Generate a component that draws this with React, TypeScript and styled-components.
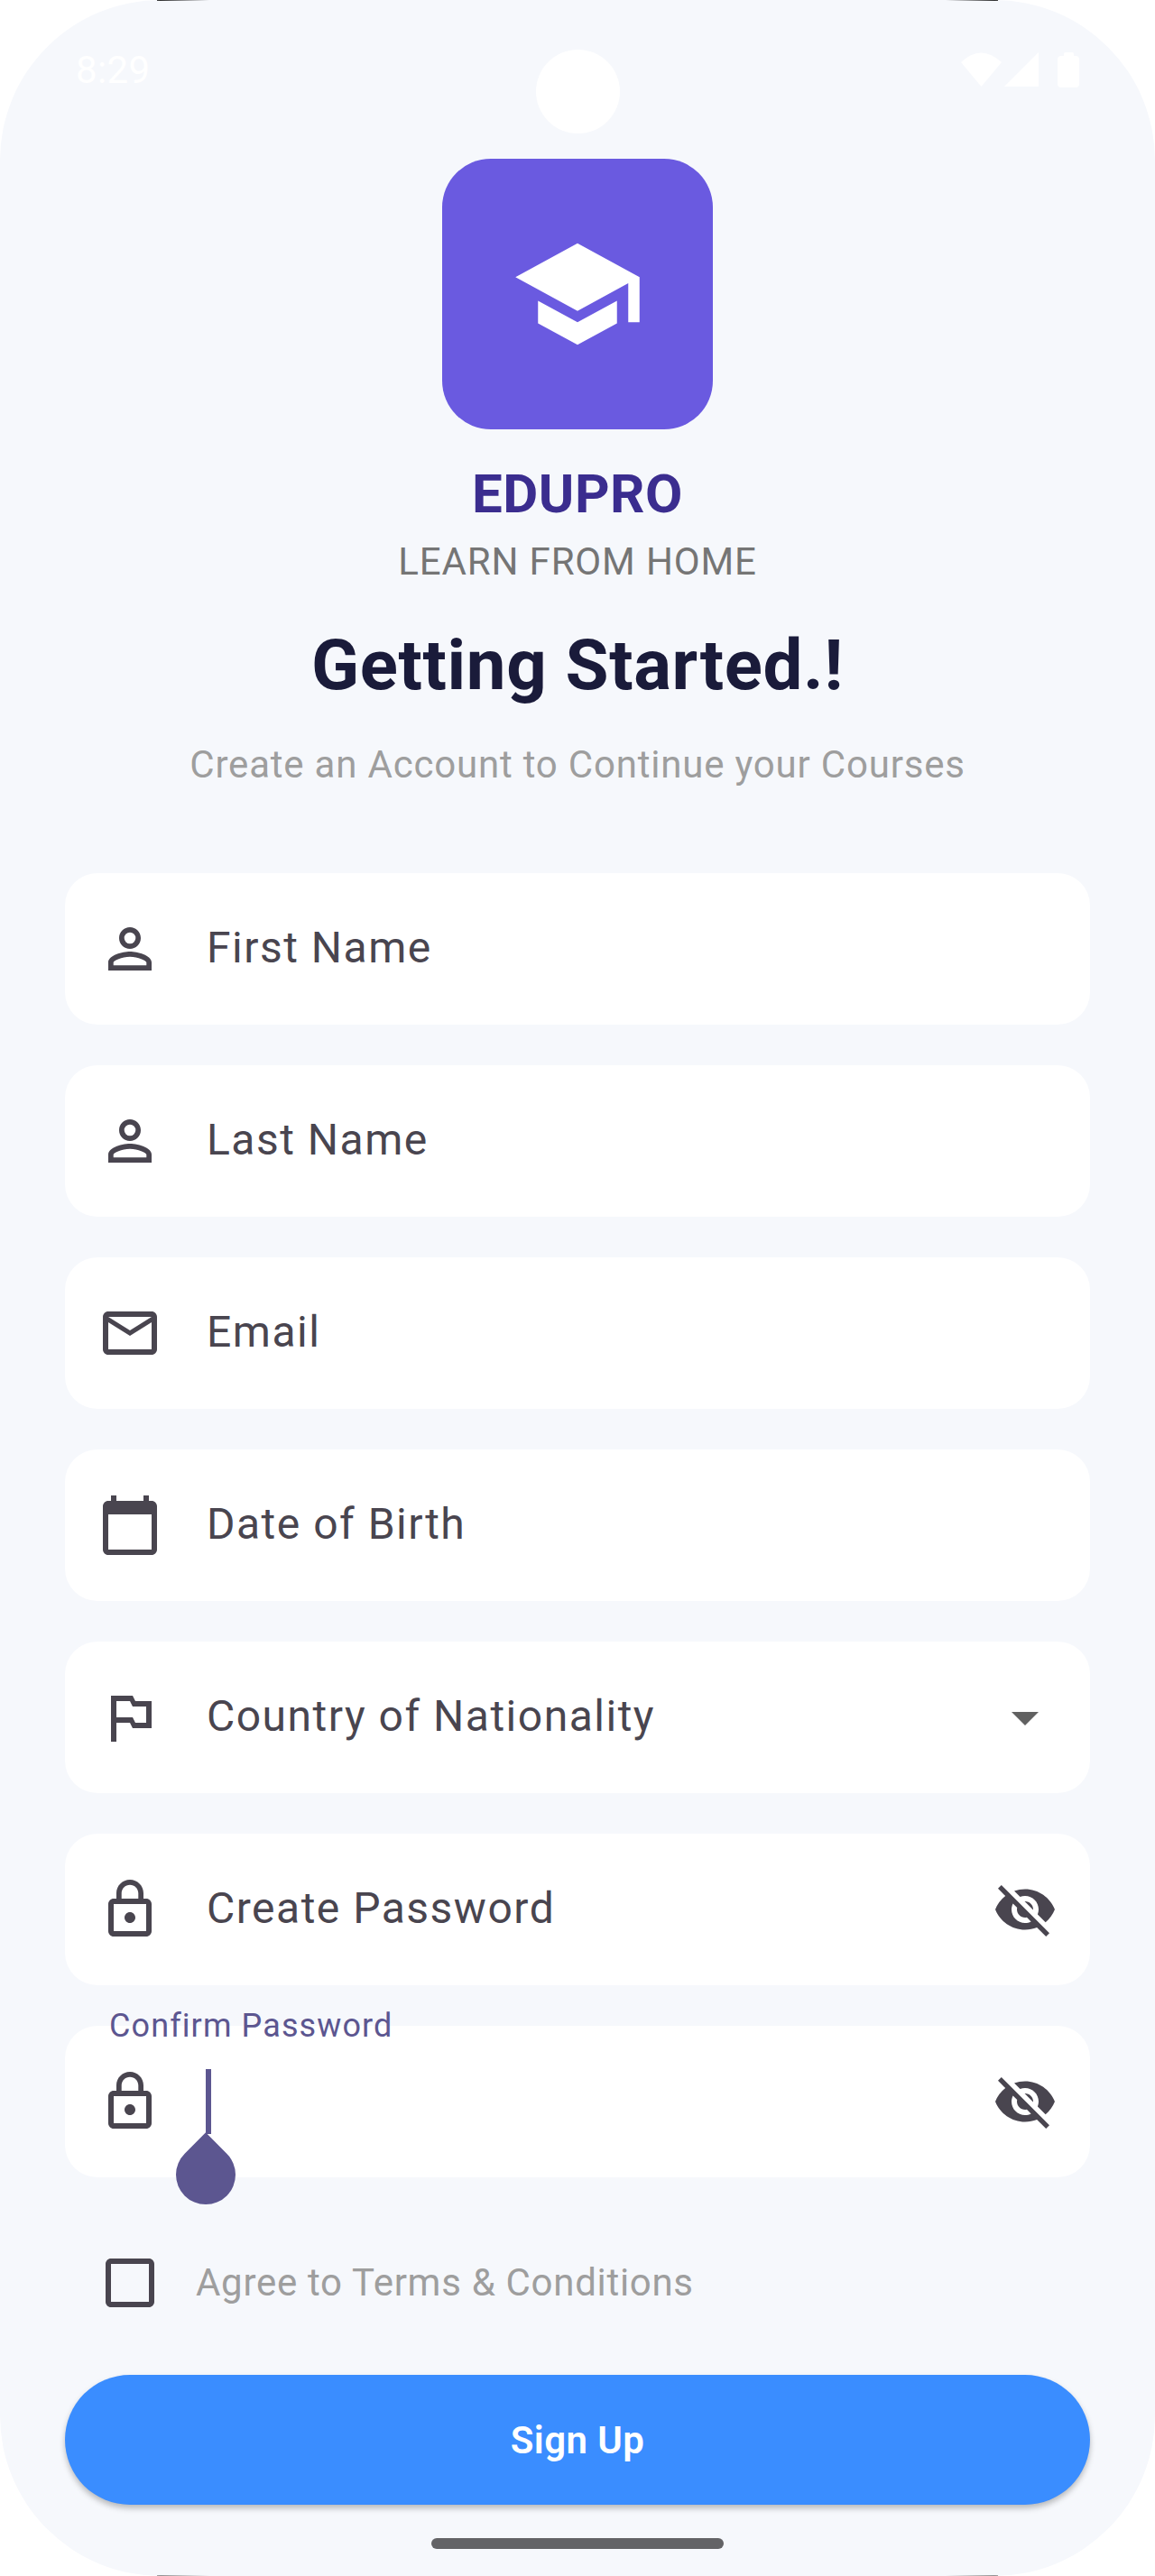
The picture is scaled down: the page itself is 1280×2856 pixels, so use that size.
import React from 'react';
import styled, { createGlobalStyle } from 'styled-components';
import {
  MdArrowDropDown,
  MdCalendarToday,
  MdCheckBoxOutlineBlank,
  MdLockOutline,
  MdMailOutline,
  MdOutlinedFlag,
  MdPersonOutline,
  MdSchool,
  MdVisibilityOff,
} from 'react-icons/md';

const GlobalStyle = createGlobalStyle`
  html, body {
    margin: 0;
    padding: 0;
    background: #fff;
  }
  * {
    box-sizing: border-box;
  }
`;

const Screen = styled.div`
  position: relative;
  width: 1280px;
  height: 2856px;
  padding: 176px 72px 0;
  background: #f6f8fc;
  border-radius: 178px;
  overflow: hidden;
  font-family: Roboto, 'Liberation Sans', sans-serif;
  display: flex;
  flex-direction: column;
  align-items: center;
`;

const EdgeLine = styled.div<{ side: 'left' | 'right'; bottom?: boolean }>`
  position: absolute;
  height: 1px;
  width: 58px;
  ${({ side }) => (side === 'left' ? 'left: 174px;' : 'right: 174px;')}
  ${({ bottom }) => (bottom ? 'bottom: 0;' : 'top: 0;')}
  background: linear-gradient(
    ${({ side }) => (side === 'left' ? 'to right' : 'to left')},
    ${({ bottom }) => (bottom ? '#8a8a8a' : '#222')},
    #f6f8fc
  );
`;

const StatusBar = styled.div`
  position: absolute;
  top: 0;
  left: 0;
  right: 0;
  height: 100px;
  color: #fff;
`;

const Clock = styled.span`
  position: absolute;
  left: 84px;
  top: 53px;
  font-size: 42px;
  line-height: 50px;
  letter-spacing: 0.4px;
`;

const StatusIcons = styled.svg`
  position: absolute;
  left: 1060px;
  top: 54px;
`;

const Camera = styled.div`
  position: absolute;
  left: 594px;
  top: 55px;
  width: 93px;
  height: 93px;
  border-radius: 50%;
  background: #fff;
`;

const Logo = styled.div`
  width: 300px;
  height: 300px;
  border-radius: 54px;
  background: #6a5ae0;
  color: #fff;
  display: flex;
  align-items: center;
  justify-content: center;
  flex-shrink: 0;
`;

const Brand = styled.h1`
  margin: 37px 0 0;
  font-size: 60px;
  line-height: 70px;
  font-weight: 700;
  letter-spacing: 0.5px;
  color: #3b2d8f;
`;

const Tagline = styled.div`
  margin-top: 15px;
  font-size: 42px;
  line-height: 50px;
  letter-spacing: 0.85px;
  color: #757575;
`;

const Title = styled.h2`
  margin: 45px 0 0;
  font-size: 78px;
  line-height: 90px;
  font-weight: 700;
  letter-spacing: 0.65px;
  color: #1a1b3a;
`;

const Subtitle = styled.div`
  margin-top: 40px;
  font-size: 42px;
  line-height: 50px;
  letter-spacing: 0.8px;
  color: #9e9e9e;
`;

const Form = styled.div`
  margin-top: 95px;
  width: 100%;
  display: flex;
  flex-direction: column;
  gap: 45px;
`;

const Field = styled.div`
  position: relative;
  height: 168px;
  padding: 0 36px;
  background: #fff;
  border-radius: 36px;
  display: flex;
  align-items: center;
  color: #49454f;
`;

const FieldText = styled.span`
  margin: 0 0 2px 49px;
  flex: 1;
  font-size: 48px;
  line-height: 72px;
  letter-spacing: 1.5px;
  color: #49454f;
`;

const Spacer = styled.span`
  flex: 1;
`;

const DropArrow = styled(MdArrowDropDown)`
  color: #616161;
`;

const FloatingLabel = styled.span`
  position: absolute;
  left: 49px;
  top: -22px;
  font-size: 36px;
  line-height: 44px;
  letter-spacing: 1.1px;
  color: #5c5690;
`;

const CaretHandle = styled.svg`
  position: absolute;
  left: 123px;
  top: 48px;
`;

const TermsRow = styled.div`
  margin-top: 81px;
  width: 100%;
  padding-left: 36px;
  height: 72px;
  display: flex;
  align-items: center;
  color: #49454f;
`;

const TermsText = styled.span`
  margin-left: 37px;
  font-size: 42px;
  line-height: 50px;
  letter-spacing: 0.7px;
  color: #9e9e9e;
`;

const SignUp = styled.button`
  margin-top: 66px;
  width: 100%;
  height: 144px;
  border: 0;
  border-radius: 72px;
  background: #3a8dff;
  box-shadow: 0 4px 6px rgba(0, 0, 0, 0.25);
  color: #fff;
  font-family: inherit;
  font-size: 42px;
  font-weight: 600;
  letter-spacing: 0.4px;
  padding: 0;
`;

const HomeBar = styled.div`
  position: absolute;
  left: 478px;
  bottom: 30px;
  width: 324px;
  height: 12px;
  border-radius: 6px;
  background: #636366;
`;

const App: React.FC = () => (
  <>
    <GlobalStyle />
    <Screen>
      <EdgeLine side="left" />
      <EdgeLine side="right" />
      <EdgeLine side="left" bottom />
      <EdgeLine side="right" bottom />

      <StatusBar>
        <Clock>8:29</Clock>
        <StatusIcons width="140" height="46" viewBox="0 0 140 46" fill="#fff">
          <path d="M5 15 Q27 -6 50 15 L27.5 42 Z" />
          <path d="M53 42 L91 4 V42 Z" />
          <path d="M121 4 h7 a2 2 0 0 1 2 2 v2 h2 a4 4 0 0 1 4 4 v27 a4 4 0 0 1 -4 4 h-16 a4 4 0 0 1 -4 -4 v-27 a4 4 0 0 1 4 -4 h3 v-2 a2 2 0 0 1 2 -2 Z" />
        </StatusIcons>
      </StatusBar>
      <Camera />

      <Logo>
        <MdSchool size={150} />
      </Logo>
      <Brand>EDUPRO</Brand>
      <Tagline>LEARN FROM HOME</Tagline>
      <Title>Getting Started.!</Title>
      <Subtitle>Create an Account to Continue your Courses</Subtitle>

      <Form>
        <Field>
          <MdPersonOutline size={72} />
          <FieldText>First Name</FieldText>
        </Field>
        <Field>
          <MdPersonOutline size={72} />
          <FieldText>Last Name</FieldText>
        </Field>
        <Field>
          <MdMailOutline size={72} />
          <FieldText>Email</FieldText>
        </Field>
        <Field>
          <MdCalendarToday size={72} />
          <FieldText>Date of Birth</FieldText>
        </Field>
        <Field>
          <MdOutlinedFlag size={72} />
          <FieldText>Country of Nationality</FieldText>
          <DropArrow size={72} />
        </Field>
        <Field>
          <MdLockOutline size={72} />
          <FieldText>Create Password</FieldText>
          <MdVisibilityOff size={72} />
        </Field>
        <Field>
          <FloatingLabel>Confirm Password</FloatingLabel>
          <MdLockOutline size={72} />
          <Spacer />
          <MdVisibilityOff size={72} />
          <CaretHandle width="66" height="151" viewBox="0 0 66 151" fill="#5c5690">
            <rect x="33" y="0" width="6" height="72" />
            <path d="M33 70.3 L56.3 93.7 A33 33 0 1 1 9.7 93.7 Z" />
          </CaretHandle>
        </Field>
      </Form>

      <TermsRow>
        <MdCheckBoxOutlineBlank size={72} />
        <TermsText>Agree to Terms &amp; Conditions</TermsText>
      </TermsRow>

      <SignUp>Sign Up</SignUp>
      <HomeBar />
    </Screen>
  </>
);

export default App;
